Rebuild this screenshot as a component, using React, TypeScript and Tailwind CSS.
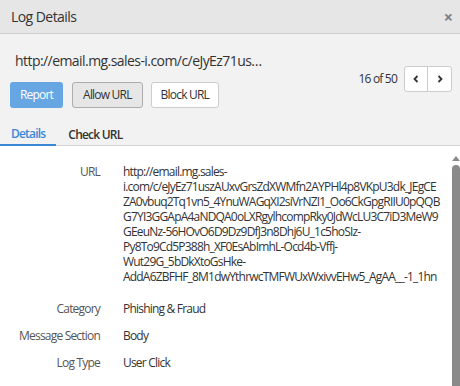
import React, { useState } from 'react'

const urlLines = [
    'http://email.mg.sales-',
    'i.com/c/eJyEz71uszAUxvGrsZdXWMfn2AYPHl4p8VKpU3dk_JEgCE',
    'ZA0vbuq2Tq1vn5_4YnuWAGqXI2siVrNZI1_Oo6CkGpgRIIU0pQQB',
    'G7YI3GGApA4aNDQA0oLXRgylhcompRky0JdWcLU3C7iD3MeW9',
    'GEeuNz-56HOvO6D9Dz9DfJ3n8Dhj6U_1c5hoSIz-',
    'Py8To9Cd5P388h_XF0EsAbImhL-Ocd4b-Vffj-',
    'Wut29G_5bDkXtoGsHke-',
    'AddA6ZBFHF_8M1dwYthrwcTMFWUxWxivvEHw5_AgAA__-1_1hn',
]

function Row({ label, children }: { label: string; children: React.ReactNode }) {
    return (
        <div className="flex pb-[12px]">
            <div className="w-[100px] shrink-0 text-right text-[#555]">{label}</div>
            <div className="pl-[23px] text-[#333]">{children}</div>
        </div>
    )
}

export default function App() {
    const [tab, setTab] = useState<'details' | 'check'>('details')

    return (
        <div className="w-[460px] h-[386px] overflow-hidden bg-[#f2f2f2] flex flex-col text-[#333] tracking-[-0.05em]" style={{ fontFamily: '"Open Sans", "Noto Sans", sans-serif' }}>
            {/* Header */}
            <div className="h-[34px] shrink-0 flex items-center justify-between pl-[11px] pr-[8px] bg-[#e6e6e6] border-b border-[#cfcfcf]">
                <h1 className="text-[14px] tracking-[-0.04em] text-[#333]">Log Details</h1>
                <button className="text-[#7a7f88] text-[16px] leading-none font-bold">×</button>
            </div>

            {/* Summary */}
            <div className="flex items-center justify-between pl-[10px] pr-[8px] pt-[8px] h-[83px] shrink-0">
                <div className="flex flex-col gap-[12px]">
                    <div className="pl-[5px] text-[14px] leading-[18px] tracking-[-0.04em] text-[#333]">http://email.mg.sales-i.com/c/eJyEz71us…</div>
                    <div className="flex text-[12px]">
                        <button className="h-[26px] px-[10px] rounded-[3px] bg-[#65a6e3] text-white">Report</button>
                        <button className="ml-[9px] h-[26px] px-[10px] rounded-[3px] bg-[#e6e6e6] border border-[#adadad] text-[#333]">Allow URL</button>
                        <button className="ml-[8px] h-[26px] px-[9px] rounded-[3px] bg-white border border-[#ccc] text-[#333]">Block URL</button>
                    </div>
                </div>
                <div className="flex items-center gap-[7px] -mt-[2px]">
                    <span className="text-[12px] text-[#333]">16 of 50</span>
                    <div className="flex h-[26px] border border-[#ccc] rounded-[3px] bg-white">
                        <button className="w-[23px] flex items-center justify-center border-r border-[#ccc]">
                            <svg width="8" height="8" viewBox="0 0 8 8"><path d="M5.5 1 L2.5 4 L5.5 7" fill="none" stroke="#333" strokeWidth="1.8" /></svg>
                        </button>
                        <button className="w-[23px] flex items-center justify-center">
                            <svg width="8" height="8" viewBox="0 0 8 8"><path d="M2.5 1 L5.5 4 L2.5 7" fill="none" stroke="#333" strokeWidth="1.8" /></svg>
                        </button>
                    </div>
                </div>
            </div>

            {/* Tabs */}
            <div className="flex h-[29px] shrink-0 border-b border-[#d4d4d4] text-[12px] font-semibold">
                <button
                    onClick={() => setTab('details')}
                    className={tab === 'details' ? 'px-[11px] pt-[7px] text-[#3a87d8] border-b-2 border-[#3a87d8] -mb-[1px]' : 'px-[11px] pt-[7px] text-[#333]'}
                >
                    Details
                </button>
                <button
                    onClick={() => setTab('check')}
                    className={tab === 'check' ? 'px-[12px] pt-[7px] text-[#3a87d8] border-b-2 border-[#3a87d8] -mb-[1px]' : 'px-[12px] pt-[7px] text-[#333]'}
                >
                    Check URL
                </button>
            </div>

            {/* Content */}
            <div className="flex-1 flex bg-white min-h-0">
                <div className="flex-1 pt-[18px] text-[12px] leading-[15px]">
                    <Row label="URL">
                        <div className="pb-[5px]">
                            {urlLines.map((l) => (
                                <div key={l} className="whitespace-nowrap">{l}</div>
                            ))}
                        </div>
                    </Row>
                    <Row label="Category">Phishing &amp; Fraud</Row>
                    <Row label="Message Section">Body</Row>
                    <Row label="Log Type">User Click</Row>
                </div>
                {/* scrollbar */}
                <div className="w-[8px] flex flex-col items-center pt-[9px]">
                    <svg width="8" height="6" viewBox="0 0 8 6"><path d="M0 6 L4 1 L8 6 Z" fill="#8a8a8a" /></svg>
                    <div className="mt-[4px] w-[8px] flex-1 bg-[#8a8a8a] rounded-t-[4px]" />
                </div>
            </div>
        </div>
    )
}
